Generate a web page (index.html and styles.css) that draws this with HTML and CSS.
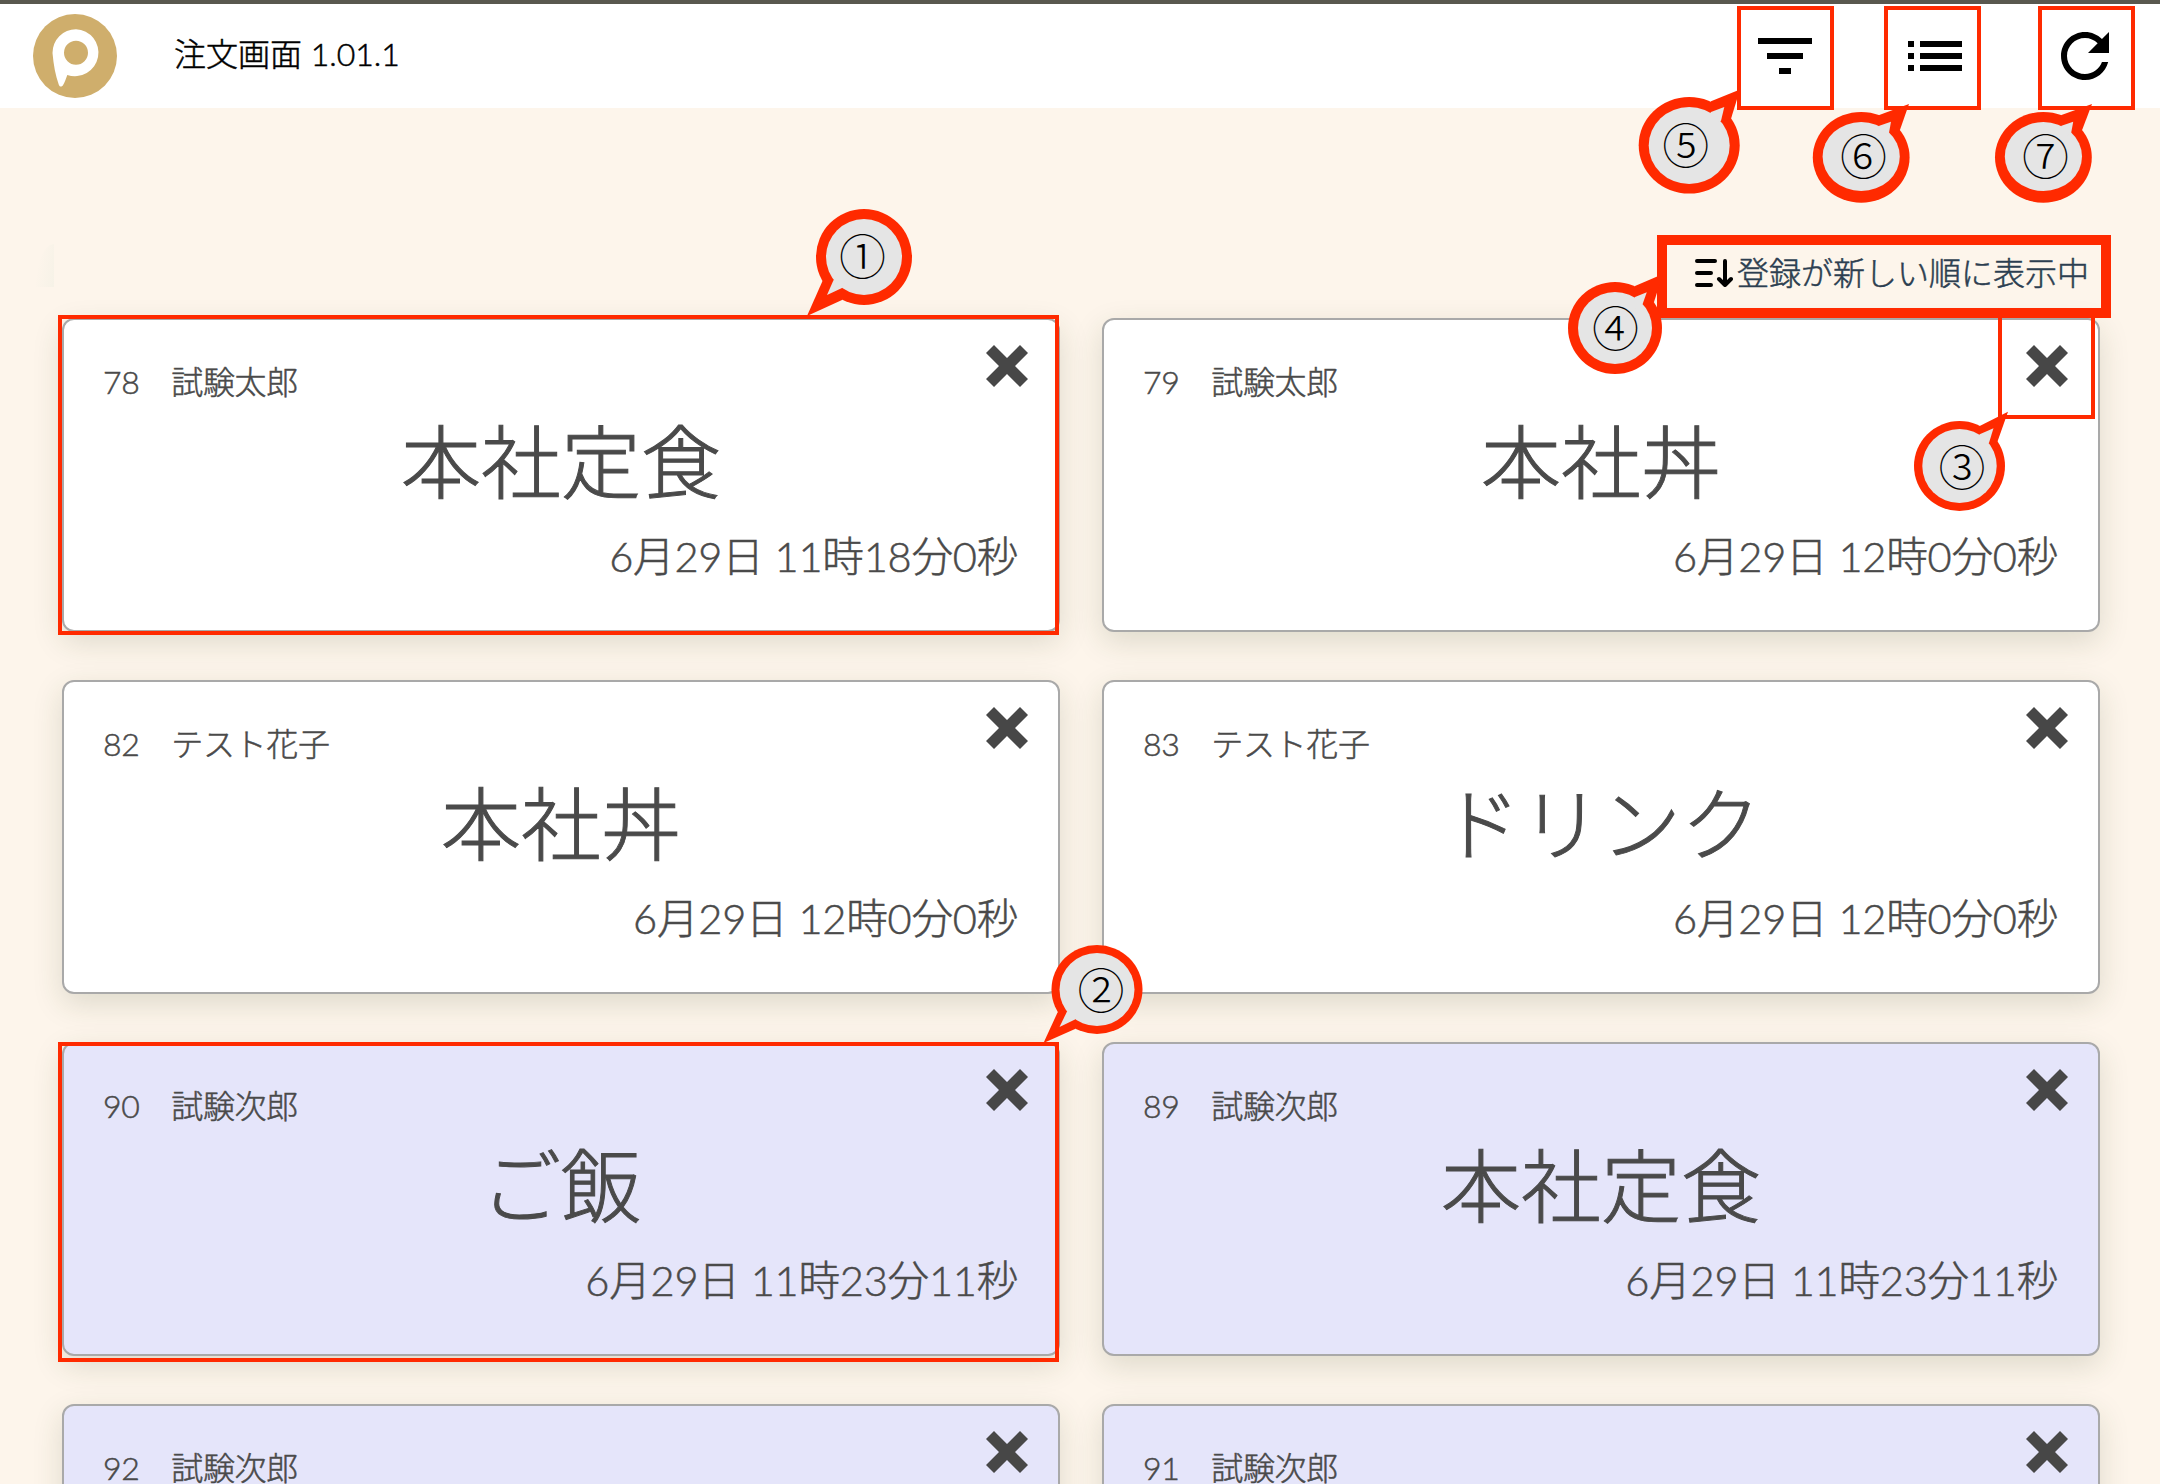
FILE: index.html
```html
<!DOCTYPE html>
<html lang="ja">
<head>
<meta charset="utf-8">
<title>注文画面</title>
<link rel="stylesheet" href="styles.css">
</head>
<body>
<div class="screen">
  <header class="header">
    <svg class="logo" viewBox="0 0 84 84">
      <circle cx="42" cy="42" r="42" fill="#cfae6c"/>
      <path fill="#fff" fill-rule="evenodd" d="M43 15.200a23.500 23.500 0 1 1-8.700 45.700c-1.300 3.800-2.700 7.500-4.200 10.200-1.200 2.100-3.400 2-4.300-.4C22.500 61.500 20.600 51 19.500 39A23.500 23.500 0 0 1 43 15.200zm0 11.600a12 12 0 1 0 0 24 12 12 0 0 0 0-24z"/>
    </svg>
    <h1 class="title">注文画面 1.01.1</h1>
    <nav class="tools">
      <svg class="tool" viewBox="0 0 24 24"><path d="M10 18h4v-2h-4v2zM3 6v2h18V6H3zm3 7h12v-2H6v2z"/></svg>
      <svg class="tool" viewBox="0 0 24 24"><path d="M3 13h2v-2H3v2zm0 4h2v-2H3v2zm0-8h2V7H3v2zm4 4h14v-2H7v2zm0 4h14v-2H7v2zM7 7v2h14V7H7z"/></svg>
      <svg class="tool" viewBox="0 0 24 24"><path d="M17.650 6.350C16.200 4.900 14.210 4 12 4c-4.420 0-7.990 3.580-7.990 8s3.570 8 7.990 8c3.730 0 6.840-2.550 7.730-6h-2.080c-.82 2.330-3.040 4-5.650 4-3.310 0-6-2.690-6-6s2.690-6 6-6c1.660 0 3.140.69 4.220 1.780L13 11h7V4l-2.350 2.350z"/></svg>
    </nav>
  </header>

  <div class="sortbar">
    <span class="sort-edge"></span>
    <svg class="sort-icon" viewBox="0 0 38 28" fill="none" stroke="#000" stroke-width="4" stroke-linecap="round" stroke-linejoin="round"><path d="M2 2h18M2 14h14M2 26h14M30 2v23M24 20l6 6 6-6"/></svg>
    <span class="sort-label">登録が新しい順に表示中</span>
  </div>

  <main class="orders">
    <article class="card">
      <div class="who">78　試験太郎</div><svg class="close" viewBox="0 0 42 42"><path d="M0 8 8 0 21 13 34 0 42 8 29 21 42 34 34 42 21 29 8 42 0 34 13 21z"/></svg>
      <h2 class="item">本社定食</h2>
      <div class="when">6月29日 11時18分0秒</div>
    </article>
    <article class="card">
      <div class="who">79　試験太郎</div><svg class="close" viewBox="0 0 42 42"><path d="M0 8 8 0 21 13 34 0 42 8 29 21 42 34 34 42 21 29 8 42 0 34 13 21z"/></svg>
      <h2 class="item">本社丼</h2>
      <div class="when">6月29日 12時0分0秒</div>
    </article>
    <article class="card">
      <div class="who">82　テスト花子</div><svg class="close" viewBox="0 0 42 42"><path d="M0 8 8 0 21 13 34 0 42 8 29 21 42 34 34 42 21 29 8 42 0 34 13 21z"/></svg>
      <h2 class="item">本社丼</h2>
      <div class="when">6月29日 12時0分0秒</div>
    </article>
    <article class="card">
      <div class="who">83　テスト花子</div><svg class="close" viewBox="0 0 42 42"><path d="M0 8 8 0 21 13 34 0 42 8 29 21 42 34 34 42 21 29 8 42 0 34 13 21z"/></svg>
      <h2 class="item">ドリンク</h2>
      <div class="when">6月29日 12時0分0秒</div>
    </article>
    <article class="card done">
      <div class="who">90　試験次郎</div><svg class="close" viewBox="0 0 42 42"><path d="M0 8 8 0 21 13 34 0 42 8 29 21 42 34 34 42 21 29 8 42 0 34 13 21z"/></svg>
      <h2 class="item">ご飯</h2>
      <div class="when">6月29日 11時23分11秒</div>
    </article>
    <article class="card done">
      <div class="who">89　試験次郎</div><svg class="close" viewBox="0 0 42 42"><path d="M0 8 8 0 21 13 34 0 42 8 29 21 42 34 34 42 21 29 8 42 0 34 13 21z"/></svg>
      <h2 class="item">本社定食</h2>
      <div class="when">6月29日 11時23分11秒</div>
    </article>
    <article class="card done">
      <div class="who">92　試験次郎</div><svg class="close" viewBox="0 0 42 42"><path d="M0 8 8 0 21 13 34 0 42 8 29 21 42 34 34 42 21 29 8 42 0 34 13 21z"/></svg>
    </article>
    <article class="card done">
      <div class="who">91　試験次郎</div><svg class="close" viewBox="0 0 42 42"><path d="M0 8 8 0 21 13 34 0 42 8 29 21 42 34 34 42 21 29 8 42 0 34 13 21z"/></svg>
    </article>
  </main>

  <!-- numbered callouts over the screen -->
  <svg class="notes" viewBox="0 0 2160 1484">
    <g class="frame">
      <rect x="60" y="317" width="997" height="316"/>
      <rect x="60" y="1044" width="997" height="316"/>
      <rect x="2000" y="312" width="93" height="105"/>
      <rect x="1739" y="8" width="93" height="100"/>
      <rect x="1886" y="8" width="93" height="100"/>
      <rect x="2040" y="8" width="93" height="100"/>
      <rect class="thick" x="1662" y="240" width="444" height="73"/>
    </g>
    <g>
      <ellipse class="rim" cx="864" cy="257" rx="48" ry="48"/><path class="rim" d="M822.500 281 807 316 842 300 850 270z"/>
      <ellipse class="face" cx="864" cy="257" rx="38" ry="38"/><path class="face" d="M833.600 280 827 295 842 288 850 270z"/>
      <text x="862.500" y="253.500">①</text>
    </g>
    <g>
      <ellipse class="rim" cx="1097" cy="989.500" rx="45.500" ry="44.500"/><path class="rim" d="M1057.500 1012.500 1043.500 1043 1075 1029 1085 1000z"/>
      <ellipse class="face" cx="1097" cy="989.500" rx="37.500" ry="36.500"/><path class="face" d="M1067 1011.500 1059.500 1027 1075 1019.500 1085 1000z"/>
      <text x="1101" y="987">②</text>
    </g>
    <g>
      <ellipse class="rim" cx="1959.500" cy="466" rx="45.500" ry="45"/><path class="rim" d="M1979.700 426 2008 411.700 1997.500 441.500 1970 455z"/>
      <ellipse class="face" cx="1959.500" cy="466" rx="37.200" ry="37"/><path class="face" d="M1979.700 434.300 1993.500 428.300 1989 442.700 1970 455z"/>
      <text x="1962" y="464.200">③</text>
    </g>
    <g>
      <ellipse class="rim" cx="1615" cy="328" rx="47" ry="46"/><path class="rim" d="M1635 286 1663 274 1654 302 1625 317z"/>
      <ellipse class="face" cx="1615" cy="328" rx="37" ry="36"/><path class="face" d="M1635 297 1646.800 292.300 1642.800 303.500 1625 317z"/>
      <text x="1615.500" y="325.200">④</text>
    </g>
    <g>
      <ellipse class="rim" cx="1689.200" cy="145.300" rx="50.500" ry="48.300"/><path class="rim" d="M1711 101.300 1740 89.500 1731 118.700 1700 130z"/>
      <ellipse class="face" cx="1689.200" cy="145.500" rx="40.500" ry="38.500"/><path class="face" d="M1711 112 1724.300 107 1721 120.700 1700 130z"/>
      <text x="1685.800" y="142.200">⑤</text>
    </g>
    <g>
      <ellipse class="rim" cx="1861.200" cy="157.300" rx="48.400" ry="45.400"/><path class="rim" d="M1879.300 115 1909 104 1900 129.700 1870 145z"/>
      <ellipse class="face" cx="1861.200" cy="156.500" rx="38.600" ry="34.500"/><path class="face" d="M1879.300 125.700 1891 121.700 1889 132.700 1870 145z"/>
      <text x="1863.500" y="153.200">⑥</text>
    </g>
    <g>
      <ellipse class="rim" cx="2043.400" cy="157.300" rx="48.400" ry="45.400"/><path class="rim" d="M2061.500 115 2092 104 2082.200 129.700 2052 145z"/>
      <ellipse class="face" cx="2043.400" cy="156.500" rx="38.600" ry="34.500"/><path class="face" d="M2061.500 125.700 2073.200 121.700 2071.200 132.700 2052 145z"/>
      <text x="2045.500" y="153.200">⑦</text>
    </g>
  </svg>
</div>
</body>
</html>
```
FILE: styles.css
```css
* { box-sizing: border-box; }

body {
  margin: 0;
  background: #fdf5eb;
  font-family: Lato, "Noto Sans CJK JP", sans-serif;
  font-weight: 300;
  -webkit-text-stroke: 0.5px currentColor;
}

.screen {
  position: relative;
  width: 2160px;
  height: 1484px;
  overflow: hidden;
  background: #fdf5eb;
}

.header {
  display: flex;
  align-items: center;
  height: 108px;
  padding: 0 39px 0 33px;
  border-top: 4px solid #59584f;
  background: #fff;
}

.logo { width: 84px; height: 84px; }

.title {
  margin: 0 auto 0 57px;
  padding-bottom: 4px;
  font-size: 32px;
  line-height: 40px;
  font-weight: 300;
  color: #000;
}

.tools { display: flex; gap: 78px; }

.tool { width: 72px; height: 72px; fill: #000; }

.sortbar {
  display: flex;
  align-items: center;
  height: 210px;
  padding: 120px 71px 0 36px;
}

.sort-edge {
  width: 18px;
  height: 43px;
  margin: -16px auto 0 0;
  border-top-left-radius: 18px 43px;
  background: linear-gradient(100deg, #fdf5eb 20%, #f6f2e7);
}

.sort-icon { width: 38px; height: 28px; margin-right: 4px; }

.sort-label {
  font-size: 32px;
  line-height: 40px;
  color: #2c3e50;
}

.orders {
  display: grid;
  grid-template-columns: 998px 998px;
  grid-auto-rows: 314px;
  gap: 48px 42px;
  padding-left: 62px;
}

.card {
  display: grid;
  grid-template-columns: 1fr 42px;
  grid-template-rows: 42px 100px 1fr;
  padding: 25px 30px 0 39px;
  border: 2px solid #a9a9a9;
  border-radius: 12px;
  background: #fff;
  box-shadow: 0 10px 30px rgba(50, 70, 30, 0.15);
  color: #4a4a4a;
}

.done { background: #e5e5fa; }

.who {
  padding-top: 17px;
  font-size: 32px;
  line-height: 40px;
  letter-spacing: -0.3px;
}

.close { width: 42px; height: 42px; fill: #474747; }

.item {
  grid-column: 1 / 3;
  margin: 24px 9px 0 0;
  font-size: 80px;
  line-height: 100px;
  font-weight: 300;
  text-align: center;
  -webkit-text-stroke-width: 1px;
}

.when {
  grid-column: 1 / 3;
  margin: 43px 10px 0 0;
  font-size: 41.6px;
  line-height: 52px;
  letter-spacing: -0.25px;
  text-align: right;
}

.notes {
  position: absolute;
  inset: 0;
  width: 2160px;
  height: 1484px;
}

.frame { fill: none; stroke: #ff2a00; stroke-width: 4; }
.thick { stroke-width: 10; }
.rim { fill: #ff2a00; }
.face { fill: #e5e5e5; }

.notes text {
  font-family: "Noto Sans CJK JP", sans-serif;
  font-size: 47px;
  font-weight: 300;
  text-anchor: middle;
  dominant-baseline: central;
  fill: #000;
}
```
